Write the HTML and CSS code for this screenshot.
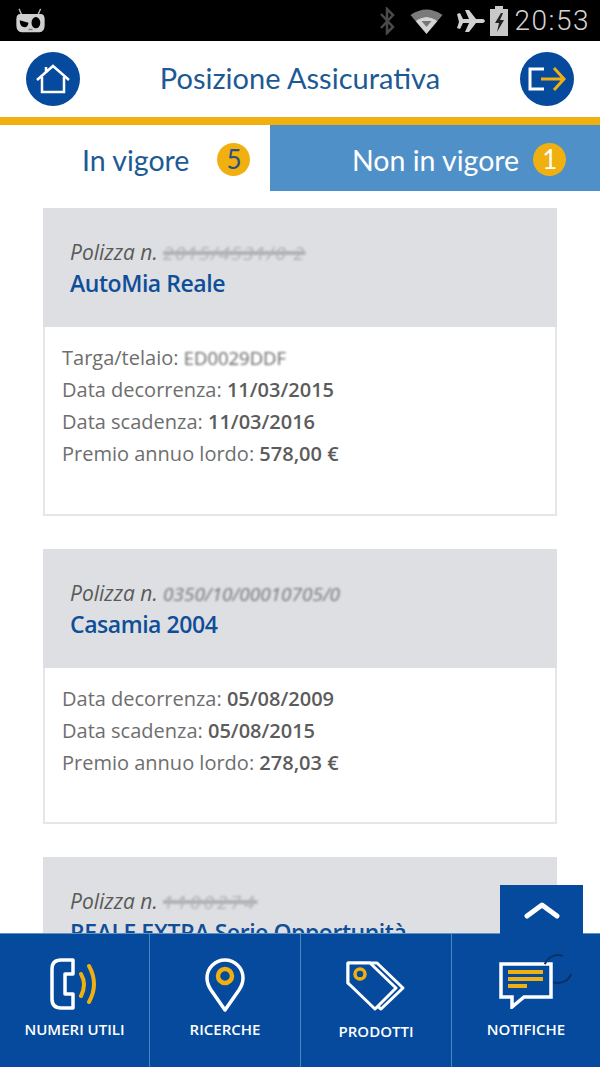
FILE: index.html
```html
<!DOCTYPE html>
<html lang="en">

<head>
    <meta charset="UTF-8">
    <meta name="viewport" content="width=device-width, initial-scale=1.0">
    <title>Posizione Assicurativa</title>
    <link rel="stylesheet" href="styles.css">
</head>

<body>
    <div class="app">
        <div class="status-bar">
            <svg class="status-mod" width="31" height="26" viewBox="0 0 46 30" preserveAspectRatio="none">
                <path d="M6 1l4 7M38 1l-4 7" stroke="#bdbdbd" stroke-width="2" fill="none"/>
                <path d="M8 7h30q6 0 6 6v7q0 8-8 8H10q-8 0-8-8v-7q0-6 6-6z" fill="#cfcfcf"/>
                <path d="M7 14l13 3q-1 6-7 5t-6-8z" fill="#000"/>
                <circle cx="31" cy="17" r="6.500" fill="#000"/>
                <rect x="20" y="24" width="6" height="1.500" fill="#777"/>
            </svg>
            <div class="status-right">
                <svg width="16" height="28" viewBox="0 0 16 28">
                    <path d="M2 7l12 13-6 6V2l6 6L2 21" stroke="#4a4a4a" stroke-width="2.500" fill="none"/>
                </svg>
                <svg class="status-wifi" width="33" height="26" viewBox="0 0 32 26">
                    <path d="M0 7Q16-4 32 7l-5 6Q16 5 5 13z" fill="#7a7a7a"/>
                    <path d="M5 13Q16 5 27 13L16 26z" fill="#d4d4d4"/>
                    <path d="M11 13h10l-5 6z" fill="#777"/>
                </svg>
                <svg class="status-plane" width="28" height="22" viewBox="0 0 28 22">
                    <path d="M0 4l3-1 3 6h6L8 0h4l7 9h7q2 1 2 2t-2 2h-7l-7 9H8l4-9H6l-3 6-3-1 2-6z" fill="#d0d0d0"/>
                </svg>
                <svg class="status-battery" width="18" height="30" viewBox="0 0 18 30">
                    <path d="M5 0h8v3h5v27H0V3h5z" fill="#c8c8c8"/>
                    <path d="M11 7l-6 10h4l-2 9 7-12h-4l3-7z" fill="#222"/>
                </svg>
                <span class="status-time">20:53</span>
            </div>
        </div>

        <header class="top-bar">
            <a class="round-btn" href="#home">
                <svg width="34" height="32" viewBox="0 0 34 32">
                    <path d="M1 17L17 3l16 14M10 4v6" fill="none" stroke="#fff" stroke-width="2.500"/>
                    <path d="M6 14v15h22V14" fill="none" stroke="#fff" stroke-width="2.500"/>
                </svg>
            </a>
            <h1 class="page-title">Posizione Assicurativa</h1>
            <a class="round-btn" href="#logout">
                <svg width="40" height="28" viewBox="0 0 40 28">
                    <path d="M17 4H3v20h14" fill="none" stroke="#fff" stroke-width="3"/>
                    <path d="M14 14h23M27 3l10 11-10 11" fill="none" stroke="#f0b00f" stroke-width="3"/>
                </svg>
            </a>
        </header>

        <nav class="tabs">
            <a class="tab tab-active" href="#in-vigore">In vigore <span class="badge badge-dark">5</span></a>
            <a class="tab tab-other" href="#non-in-vigore">Non in vigore <span class="badge">1</span></a>
        </nav>

        <main class="content">
            <div class="card">
                <div class="card-head">
                    <p class="policy-no">Polizza n. <span class="smudge smudge-streak">2015/4531/0 2</span></p>
                    <h2 class="policy-name">AutoMia Reale</h2>
                </div>
                <div class="card-body">
                    <p>Targa/telaio: <span class="smudge smudge-plate">ED0029DDF</span></p>
                    <p>Data decorrenza: <b>11/03/2015</b></p>
                    <p>Data scadenza: <b>11/03/2016</b></p>
                    <p>Premio annuo lordo: <b>578,00 €</b></p>
                </div>
            </div>

            <div class="card">
                <div class="card-head">
                    <p class="policy-no">Polizza n. <span class="smudge">0350/10/00010705/0</span></p>
                    <h2 class="policy-name">Casamia 2004</h2>
                </div>
                <div class="card-body">
                    <p>Data decorrenza: <b>05/08/2009</b></p>
                    <p>Data scadenza: <b>05/08/2015</b></p>
                    <p>Premio annuo lordo: <b>278,03 €</b></p>
                </div>
            </div>

            <div class="card">
                <div class="card-head">
                    <p class="policy-no">Polizza n. <span class="smudge smudge-streak smudge-short">1100274</span></p>
                    <h2 class="policy-name">REALE EXTRA Serie Opportunità</h2>
                </div>
            </div>
        </main>

        <nav class="bottom-nav">
            <a class="nav-item" href="#numeri">
                <svg width="50" height="54" viewBox="0 0 50 54">
                    <path d="M23 2H11Q2 2 2 11v30q0 9 9 9h12V36h-8V16h8z" fill="none" stroke="#fff" stroke-width="3.500" stroke-linejoin="round"/>
                    <path d="M31 16q6 10 0 22M39 8q10 18 0 36" fill="none" stroke="#f0b00f" stroke-width="4" stroke-linecap="round"/>
                </svg>
                <span>NUMERI UTILI</span>
            </a>
            <a class="nav-item" href="#ricerche">
                <svg width="40" height="54" viewBox="0 0 40 54">
                    <path d="M20 52L6 32Q2 26 2 20a18 18 0 0 1 36 0q0 6-4 12z" fill="none" stroke="#fff" stroke-width="3.500" stroke-linejoin="round"/>
                    <circle cx="20" cy="18" r="7" fill="none" stroke="#f0b00f" stroke-width="4.500"/>
                </svg>
                <span>RICERCHE</span>
            </a>
            <a class="nav-item nav-item-low" href="#prodotti">
                <svg width="60" height="50" viewBox="0 0 60 50">
                    <path d="M2 2h29l26 25-22 21L2 22z" fill="#054a9c" stroke="#fff" stroke-width="3" stroke-linejoin="round"/>
                    <path d="M2 2h22l26 25-21 21L2 22z" fill="#054a9c" stroke="#fff" stroke-width="3" stroke-linejoin="round"/>
                    <circle cx="14" cy="13" r="5" fill="none" stroke="#f0b00f" stroke-width="3.500"/>
                </svg>
                <span>PRODOTTI</span>
            </a>
            <a class="nav-item nav-item-low" href="#notifiche">
                <svg width="54" height="48" viewBox="0 0 54 48">
                    <path d="M2 3h50v33H25L13 46V36H2z" fill="none" stroke="#fff" stroke-width="3.500"/>
                    <path d="M9 11h35M9 18h35M9 25h19" stroke="#f0b00f" stroke-width="4"/>
                </svg>
                <span>NOTIFICHE</span>
                <i class="spinner"></i>
            </a>
            <a class="scroll-top" href="#top">
                <svg width="36" height="20" viewBox="0 0 36 20">
                    <path d="M3 16L18 5l15 11" fill="none" stroke="#fff" stroke-width="5" stroke-linecap="round" stroke-linejoin="round"/>
                </svg>
            </a>
        </nav>
    </div>
</body>

</html>
```

FILE: styles.css
```css
body {
    font-family: "Open Sans", sans-serif;
    margin: 0;
    padding: 0;
    background-color: white;
}

a {
    text-decoration: none;
}

p, h1, h2 {
    margin: 0;
}

.app {
    display: flex;
    flex-direction: column;
    height: 1067px;
    overflow: hidden;
}

/* status bar */
.status-bar {
    display: flex;
    justify-content: space-between;
    align-items: center;
    flex: none;
    height: 41px;
    padding: 0 10px 0 15px;
    background-color: black;
}

.status-right {
    display: flex;
    align-items: center;
}

.status-wifi {
    margin-left: 15px;
}

.status-plane {
    margin-left: 14px;
}

.status-battery {
    margin-left: 5px;
}

.status-time {
    margin-left: 6px;
    font-family: Roboto, sans-serif;
    font-size: 28px;
    font-weight: 300;
    letter-spacing: 1.500px;
    color: #d4d4d4;
}

/* header */
.top-bar {
    display: flex;
    justify-content: space-between;
    align-items: center;
    flex: none;
    height: 76px;
    padding: 0 26px;
    border-bottom: 8px solid #f0b00f;
}

.round-btn {
    display: flex;
    justify-content: center;
    align-items: center;
    width: 54px;
    height: 54px;
    border-radius: 50%;
    background-color: #054a9c;
}

.page-title {
    margin-top: -3px;
    font-family: Lato, sans-serif;
    font-size: 29px;
    font-weight: 400;
    color: #1d5a94;
}

/* tabs */
.tabs {
    display: flex;
    flex: none;
    height: 66px;
}

.tab {
    display: flex;
    align-items: center;
    padding-top: 4px;
    padding-left: 82px;
    box-sizing: border-box;
    font-family: Lato, sans-serif;
    font-size: 28.500px;
}

.tab-active {
    width: 270px;
    gap: 28px;
    color: #1d5a94;
}

.tab-other {
    width: 330px;
    gap: 14px;
    color: white;
    background-color: #4f90c8;
}

.badge {
    display: flex;
    justify-content: center;
    align-items: center;
    width: 33px;
    height: 33px;
    margin-top: -2px;
    border-radius: 50%;
    background-color: #f0b00f;
    font-size: 26px;
}

.badge-dark {
    color: #2f4f7f;
}

/* policy cards */
.content {
    flex: 1;
    min-height: 0;
    padding: 17px 43px 0;
}

.card {
    margin-bottom: 33px;
}

.card-head {
    height: 119px;
    box-sizing: border-box;
    padding: 29px 27px 0;
    background-color: #dddfe2;
}

.policy-no {
    font-size: 21px;
    font-style: italic;
    line-height: 31px;
    color: #5a5a5a;
}

.policy-name {
    margin-top: -1px;
    font-size: 23px;
    font-weight: 600;
    line-height: 31px;
    letter-spacing: -0.450px;
    color: #0f4e98;
}

.card-body {
    padding: 15px 17px 43.500px;
    border: 2px solid #e4e6e8;
    border-top: none;
    font-size: 20px;
    line-height: 32px;
    color: #6e6e6e;
}

.card-body b {
    font-weight: 600;
    color: #5c5c5c;
}

.smudge {
    display: inline-block;
    font-size: 19px;
    color: #777;
    filter: blur(1px);
}

.smudge-streak {
    text-decoration: line-through;
    text-decoration-thickness: 4px;
    color: #b0b2b4;
    letter-spacing: 1.500px;
}

.smudge-short {
    letter-spacing: 3px;
}

.smudge-plate {
    font-size: 18.500px;
    color: #666;
}

/* bottom nav */
.bottom-nav {
    position: relative;
    display: grid;
    grid-template-columns: 149px 151px 151px 149px;
    flex: none;
    height: 133px;
    margin-top: -1px;
    border-top: 1px solid #5b93c7;
    background-color: #054a9c;
}

.scroll-top {
    position: absolute;
    top: -49px;
    left: 500px;
    display: flex;
    justify-content: center;
    align-items: center;
    width: 83px;
    height: 49px;
    background-color: #054a9c;
}

.nav-item {
    position: relative;
    display: flex;
    flex-direction: column;
    align-items: center;
    padding-top: 24px;
    box-sizing: border-box;
    border-left: 1px solid #4a86c4;
    font-size: 15px;
    font-weight: 600;
    color: white;
}

.nav-item:first-child {
    border-left: none;
}

.nav-item span {
    margin-top: 7px;
}

.nav-item-low {
    padding-top: 27px;
}

.nav-item-low span {
    margin-top: 10px;
}

.spinner {
    position: absolute;
    top: 20px;
    right: 27px;
    width: 30px;
    height: 30px;
    box-sizing: border-box;
    border: 2px solid transparent;
    border-top-color: #0d2f66;
    border-bottom-color: #0d2f66;
    border-radius: 50%;
    transform: rotate(-25deg);
}
```
